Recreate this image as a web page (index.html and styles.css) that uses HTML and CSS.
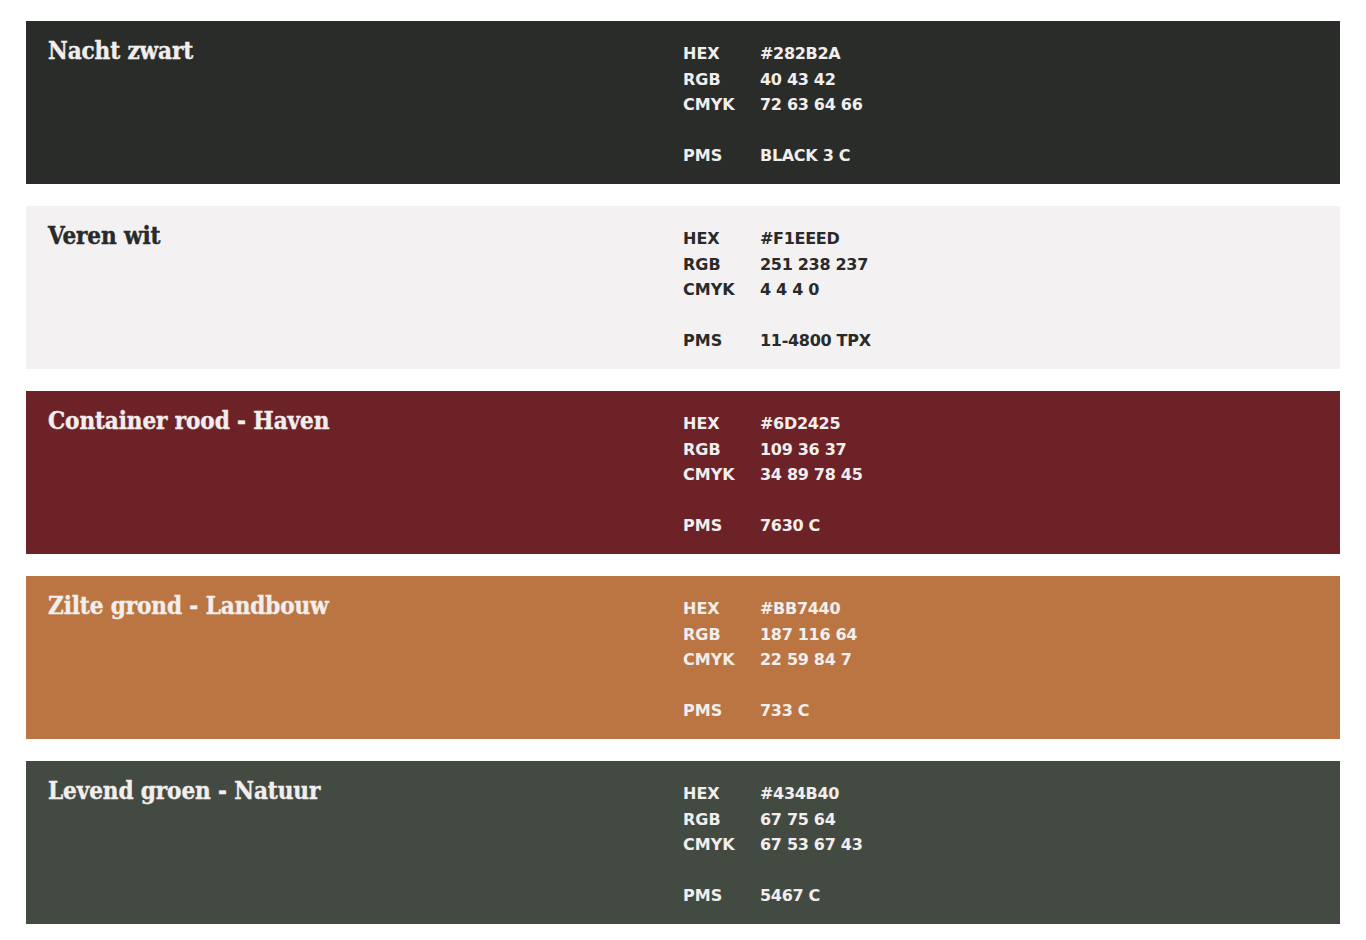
FILE: index.html
```html
<!DOCTYPE html>
<html lang="nl">
<head>
<meta charset="utf-8">
<title>Kleuren</title>
<link rel="stylesheet" href="styles.css">
</head>
<body>
<main class="palette">
  <section class="swatch swatch--zwart">
    <h2 class="swatch__name">Nacht zwart</h2>
    <dl class="swatch__codes">
      <dt>HEX</dt><dd>#282B2A</dd>
      <dt>RGB</dt><dd>40 43 42</dd>
      <dt>CMYK</dt><dd>72 63 64 66</dd>
      <dt class="gap">PMS</dt><dd class="gap">BLACK 3 C</dd>
    </dl>
  </section>
  <section class="swatch swatch--wit">
    <h2 class="swatch__name">Veren wit</h2>
    <dl class="swatch__codes">
      <dt>HEX</dt><dd>#F1EEED</dd>
      <dt>RGB</dt><dd>251 238 237</dd>
      <dt>CMYK</dt><dd>4 4 4 0</dd>
      <dt class="gap">PMS</dt><dd class="gap">11-4800 TPX</dd>
    </dl>
  </section>
  <section class="swatch swatch--rood">
    <h2 class="swatch__name">Container rood - Haven</h2>
    <dl class="swatch__codes">
      <dt>HEX</dt><dd>#6D2425</dd>
      <dt>RGB</dt><dd>109 36 37</dd>
      <dt>CMYK</dt><dd>34 89 78 45</dd>
      <dt class="gap">PMS</dt><dd class="gap">7630 C</dd>
    </dl>
  </section>
  <section class="swatch swatch--grond">
    <h2 class="swatch__name">Zilte grond - Landbouw</h2>
    <dl class="swatch__codes">
      <dt>HEX</dt><dd>#BB7440</dd>
      <dt>RGB</dt><dd>187 116 64</dd>
      <dt>CMYK</dt><dd>22 59 84 7</dd>
      <dt class="gap">PMS</dt><dd class="gap">733 C</dd>
    </dl>
  </section>
  <section class="swatch swatch--groen">
    <h2 class="swatch__name">Levend groen - Natuur</h2>
    <dl class="swatch__codes">
      <dt>HEX</dt><dd>#434B40</dd>
      <dt>RGB</dt><dd>67 75 64</dd>
      <dt>CMYK</dt><dd>67 53 67 43</dd>
      <dt class="gap">PMS</dt><dd class="gap">5467 C</dd>
    </dl>
  </section>
</main>
</body>
</html>
```
FILE: styles.css
```css
* { box-sizing: border-box; }

html, body {
  margin: 0;
  background: #ffffff;
}

body {
  padding: 21px 26px 0;
}

.palette {
  display: flex;
  flex-direction: column;
  gap: 22px;
}

.swatch {
  height: 163px;
  padding: 0 22px;
  display: grid;
  grid-template-columns: 1fr 1fr;
  color: #f1eeed;
}

.swatch--zwart { background: #2a2c2a; }
.swatch--wit { background: #f3f1f1; color: #282b2a; }
.swatch--rood { background: #6d2227; }
.swatch--grond { background: #bb7542; }
.swatch--groen { background: #434a42; }

.swatch__name {
  margin: 0;
  padding-top: 15px;
  font-family: "DejaVu Serif", "Liberation Serif", serif;
  font-stretch: condensed;
  font-weight: 700;
  font-size: 24px;
  line-height: 30px;
  letter-spacing: -0.1px;
  -webkit-text-stroke: 0.4px currentColor;
}

.swatch__codes {
  margin: 0;
  padding-top: 20px;
  display: grid;
  grid-template-columns: 77px auto;
  align-content: start;
  font-family: "DejaVu Sans", "Noto Sans", sans-serif;
  font-weight: 700;
  font-size: 16px;
  line-height: 25.6px;
}

.swatch__codes dt,
.swatch__codes dd {
  margin: 0;
}

.swatch__codes dd {
  letter-spacing: -0.3px;
}

.swatch__codes .gap {
  margin-top: 25.6px;
}
```
